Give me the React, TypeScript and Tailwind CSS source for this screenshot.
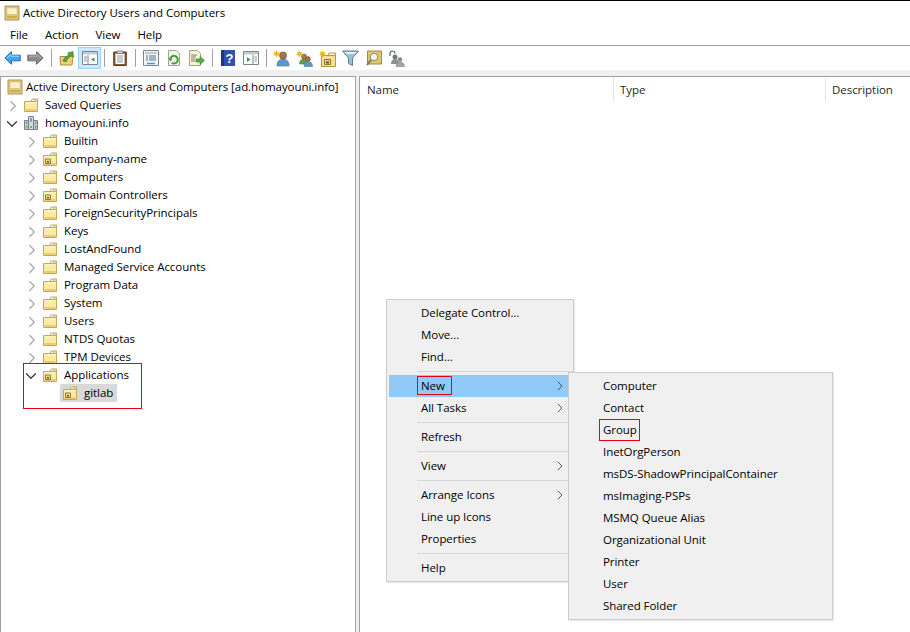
import React from "react";
import { ChevronDown, ChevronRight } from "lucide-react";

const FONT = "font-['Open_Sans','Noto_Sans',sans-serif]";

// tree icons
const Folder = ({ ou }: { ou?: boolean }) => (
  <svg width="16" height="16" viewBox="0 0 16 16" className="shrink-0">
    <path d="M1.500 4.500h13v10h-13z" fill="#fbe9a8" stroke="#c9a94f" />
    <path d="M8 4.500l1.200-2.500h5.300v2.500z" fill="#fdf6d8" stroke="#c9a94f" />
    <path d="M11 3h2.500" stroke="#7fb4e0" />
    <path d="M2.500 5.500h11v1h-11z" fill="#fff6cf" />
    <path d="M2.500 12h11v2h-11z" fill="#eccb6f" />
    {ou && <path d="M3.500 8h5v4.500h-5z" fill="#f3dc8e" stroke="#8f7a3a" />}
    {ou && <path d="M5 10h2v1.500h-2z" fill="#55502f" />}
  </svg>
);

const RootIcon = () => (
  <svg width="16" height="16" viewBox="0 0 16 16" className="shrink-0">
    <path d="M1 1h14v14H1z" fill="#e3c873" stroke="#a4946a" />
    <path d="M3 3h10v6.500H3z" fill="#fbf3cb" stroke="#c4b47c" strokeWidth=".5" />
    <path d="M3 11h10v2H3z" fill="#cfab4d" />
  </svg>
);

const DomainIcon = () => (
  <svg width="16" height="16" viewBox="0 0 16 16" className="shrink-0">
    <path d="M5.500 1.500h5v13h-5z" fill="#d5dbdf" stroke="#77838a" />
    <path d="M1.500 5.500h4v9h-4zM10.500 5.500h4v9h-4z" fill="#b9c3c9" stroke="#77838a" />
    <path d="M7 4h2M7 6h2M3 8h1M12 8h1" stroke="#4e5b63" />
    <path d="M3 11h1.500v1.500H3zM7 11h2v2H7zM12 11h1.500v1.500H12z" fill="#5cc04a" />
  </svg>
);

// toolbar icons
const Back = ({ flip, grey }: { flip?: boolean; grey?: boolean }) => (
  <svg width="17" height="14" viewBox="0 0 17 14" className={flip ? "-scale-x-100" : ""}>
    <path
      d="M.8 7L7.500 .8v3.400h8.700v5.600H7.500v3.400z"
      fill={grey ? "#8b8b8b" : "#42a5ee"}
      stroke={grey ? "#6a6a6a" : "#1b6fb8"}
    />
    <path d="M3 7L7 3.500v1.700h8" fill="none" stroke={grey ? "#b5b5b5" : "#a6dcfb"} />
  </svg>
);

const UpFolder = () => (
  <svg width="16" height="16" viewBox="0 0 16 16">
    <path d="M1 6.500h13l-1 8.500H1.500z" fill="#f2cf74" stroke="#b18f3c" />
    <path d="M4 11c1-3 3-5 6-6L8.500 3 14 1.500 14.500 7 12.500 5.800C10 7 8 9 7 12z" fill="#58a23c" stroke="#3a7726" strokeWidth=".6" />
  </svg>
);

const TreeToggle = () => (
  <svg width="16" height="14" viewBox="0 0 16 14">
    <path d="M.5 .5h15v13H.5z" fill="#fff" stroke="#7b8790" />
    <path d="M1 1h14v2.500H1z" fill="#c3ccd3" />
    <path d="M6 4v9" stroke="#7b8790" />
    <path d="M2 6h3M2 8h3M2 10h3" stroke="#8d99a3" />
    <path d="M12.500 6.500v4L9 8.500z" fill="#2e9e45" />
  </svg>
);

const Clipboard = () => (
  <svg width="14" height="16" viewBox="0 0 14 16">
    <path d="M.7 2h12.600v13.500H.7z" fill="#8a5a35" stroke="#5e3a1e" />
    <path d="M2.500 3.500h9V14h-9z" fill="#fff" />
    <path d="M4 1h6v2.500H4z" fill="#d2d6d9" stroke="#5b6670" strokeWidth=".7" />
    <path d="M4 6h6M4 8h6M4 10h6M4 12h6" stroke="#8c99a5" />
  </svg>
);

const Sheet = () => (
  <svg width="16" height="16" viewBox="0 0 16 16">
    <path d="M.5 .5h15v15H.5z" fill="#f2f4f6" stroke="#7b8790" />
    <path d="M2 2h12v2H2z" fill="#c3ccd3" />
    <path d="M3 6h2M6 6h7M3 8h2M6 8h7M3 10h2M6 10h7" stroke="#62717d" />
    <path d="M4 13.500h8" stroke="#3aa3db" strokeWidth="1.500" />
  </svg>
);

const Refresh = () => (
  <svg width="16" height="16" viewBox="0 0 16 16">
    <path d="M2.500 .5h8l3 3v12h-11z" fill="#f5f5ee" stroke="#a0a39a" />
    <path d="M4.200 9.500a3.800 3.800 0 1 1 1.500 3.200" fill="none" stroke="#3f9f3a" strokeWidth="2" />
    <path d="M2.500 8.500h4l-2 3z" fill="#3f9f3a" />
  </svg>
);

const ExportDoc = () => (
  <svg width="17" height="16" viewBox="0 0 17 16">
    <path d="M1.500 .5h8l3 3v12h-11z" fill="#faf5d8" stroke="#a8a27e" />
    <path d="M3 5h6M3 7h5M3 9h4M3 11h4" stroke="#7c7a63" />
    <path d="M8 9h4V6.500l4.500 4-4.500 4V12H8z" fill="#57b04a" stroke="#35802b" strokeWidth=".6" />
  </svg>
);

const Help = () => (
  <svg width="14" height="16" viewBox="0 0 14 16">
    <path d="M0 0h14v16H0z" fill="#2f51b3" />
    <path d="M0 0h3v16H0z" fill="#1d348a" />
    <text x="8.500" y="13" fontSize="13" fontWeight="700" textAnchor="middle" fill="#fff" fontFamily="Liberation Sans, sans-serif">?</text>
  </svg>
);

const RunPane = () => (
  <svg width="16" height="14" viewBox="0 0 16 14">
    <path d="M.5 .5h15v13H.5z" fill="#fff" stroke="#7b8790" />
    <path d="M1 1h14v2.500H1z" fill="#c3ccd3" />
    <path d="M10 4v9" stroke="#7b8790" />
    <path d="M11.500 6H14M11.500 8H14M11.500 10H14" stroke="#8d99a3" />
    <path d="M4 6v5l3.500-2.500z" fill="#2e9e45" />
  </svg>
);

const Spark = () => (
  <path d="M3.500 0l.8 2.400 2.500-.7-1.400 2 1.600 1.800-2.500-.3-1 2.300-.9-2.300L0 5.500l1.700-1.800L.3 1.700l2.400.7z" fill="#f2b01e" />
);

const NewUser = () => (
  <svg width="17" height="17" viewBox="0 0 17 17">
    <circle cx="10" cy="5.500" r="3.500" fill="#a5734c" stroke="#5e3e25" strokeWidth=".6" />
    <path d="M4 16c0-5 2.500-7 6-7s6 2 6 7z" fill="#5f97c8" stroke="#3c6b95" strokeWidth=".6" />
    <Spark />
  </svg>
);

const NewGroup = () => (
  <svg width="17" height="17" viewBox="0 0 17 17">
    <circle cx="8" cy="6.500" r="2.600" fill="#a3814f" stroke="#60502a" strokeWidth=".5" />
    <path d="M3.500 14c0-3.500 2-5 4.500-5s4 1.500 4 5z" fill="#6d9d4b" stroke="#466d2d" strokeWidth=".5" />
    <circle cx="12" cy="9" r="2.400" fill="#a5734c" stroke="#5e3e25" strokeWidth=".5" />
    <path d="M8 16.500c0-3.500 1.500-5 4-5s4.500 1.500 4.500 5z" fill="#5f97c8" stroke="#3c6b95" strokeWidth=".5" />
    <Spark />
  </svg>
);

const NewOu = () => (
  <svg width="17" height="17" viewBox="0 0 17 17">
    <path d="M2.500 5.500h14v11h-14z" fill="#f6df94" stroke="#b9963f" />
    <path d="M9 5.500L10 3h6.500v2.500z" fill="#fdf4cf" stroke="#b9963f" />
    <path d="M5.500 9.500h6v5h-6z" fill="#f0d27a" stroke="#8d7532" />
    <path d="M7 11.500h3v2H7z" fill="#5a5230" />
    <Spark />
  </svg>
);

const Funnel = () => (
  <svg width="17" height="16" viewBox="0 0 17 16">
    <path d="M.5 1h16l-6 7v7.500l-4-2V8z" fill="#9fc0d4" stroke="#64808f" />
    <path d="M2.500 2h12l-2 2h-8z" fill="#e3eef4" />
  </svg>
);

const FindIcon = () => (
  <svg width="16" height="16" viewBox="0 0 16 16">
    <path d="M1.500 1h14v13h-14z" fill="#e2c66c" stroke="#9f8a49" />
    <circle cx="8" cy="7" r="3.800" fill="#f7f3dc" stroke="#8a8a80" />
    <path d="M5 10l-4 5" stroke="#77766c" strokeWidth="2" />
  </svg>
);

const Delegate = () => (
  <svg width="17" height="17" viewBox="0 0 17 17">
    <path d="M2 6V3.500a2.500 2.500 0 0 1 5 0" fill="none" stroke="#5e6467" strokeWidth="1.200" />
    <circle cx="7" cy="7" r="2.500" fill="#74797b" />
    <path d="M3 14c0-3.500 2-5 4-5s4 1.500 4 5z" fill="#8b9092" />
    <circle cx="12" cy="9.500" r="2.300" fill="#888d8f" />
    <path d="M8 16.500c0-3 2-4.500 4-4.500s4.500 1.500 4.500 4.500z" fill="#a3a7a9" stroke="#6f7476" strokeWidth=".5" />
  </svg>
);

const Btn = ({ active, children }: { active?: boolean; children: React.ReactNode }) => (
  <div
    className={`w-[23px] h-[22px] flex items-center justify-center border ${
      active ? "bg-[#cce8ff] border-[#99d1ff]" : "border-transparent"
    }`}
  >
    {children}
  </div>
);

const Sep = ({ w = "w-[8px]" }: { w?: string }) => (
  <div className={`${w} h-[18px] flex justify-center shrink-0`}>
    <div className="w-px h-full bg-[#a0a0a0]" />
  </div>
);

const Twisty = ({ open }: { open?: boolean }) => (
  <span className="w-[19px] shrink-0 flex translate-y-[1px]">
    {open ? (
      <ChevronDown size={18} strokeWidth={1.800} className="-ml-[1px] shrink-0 text-[#404040]" />
    ) : (
      <ChevronRight size={18} strokeWidth={1.600} className="shrink-0 text-[#a6a6a6]" />
    )}
  </span>
);

const Row = ({ label, ou, open }: { label: string; ou?: boolean; open?: boolean }) => (
  <div className="flex items-center h-[18px]">
    <Twisty open={open} />
    <Folder ou={ou} />
    <span className="ml-[6px] whitespace-nowrap">{label}</span>
  </div>
);

const domainChildren: { label: string; ou?: boolean }[] = [
  { label: "Builtin" },
  { label: "company-name", ou: true },
  { label: "Computers" },
  { label: "Domain Controllers", ou: true },
  { label: "ForeignSecurityPrincipals" },
  { label: "Keys" },
  { label: "LostAndFound" },
  { label: "Managed Service Accounts" },
  { label: "Program Data" },
  { label: "System" },
  { label: "Users" },
  { label: "NTDS Quotas" },
  { label: "TPM Devices" },
];

const ContextItem = ({
  label,
  arrow,
  hot,
  box,
}: {
  label: string;
  arrow?: boolean;
  hot?: boolean;
  box?: string;
}) => (
  <div className={`h-[22px] flex items-center ${hot ? "bg-[#91c9f7]" : ""}`}>
    <span className="w-[32px] shrink-0" />
    <span className="relative whitespace-nowrap">
      {label}
      {box && <span className={`absolute border border-[#e60012] ${box}`} />}
    </span>
    {arrow && <ChevronRight size={16} strokeWidth={1.300} className="ml-auto mr-[3px] text-[#404040]" />}
  </div>
);

const MenuSep = () => (
  <div className="h-[7px] pl-[28px] -mr-[2px] flex items-center">
    <div className="h-px w-full bg-[#d7d7d7]" />
  </div>
);

export default function App() {
  return (
    <div className={`relative w-[910px] h-[632px] overflow-hidden bg-white text-[11.5px] leading-[18px] tracking-[-0.05px] text-black ${FONT}`}>
      <div className="h-px bg-black" />
      {/* title bar */}
      <div className="h-[24px] flex items-center pl-[4px] gap-[3px]">
        <RootIcon />
        <span>Active Directory Users and Computers</span>
      </div>
      {/* menu bar */}
      <div className="h-[21px] flex items-center pl-[10px] gap-[17px] border-b border-[#a0a0a0]">
        <span>File</span>
        <span>Action</span>
        <span>View</span>
        <span>Help</span>
      </div>
      {/* toolbar */}
      <div className="h-[24px] flex items-center pl-[1px]">
        <Btn><Back /></Btn>
        <Btn><Back flip grey /></Btn>
        <Sep />
        <Btn><UpFolder /></Btn>
        <Btn active><TreeToggle /></Btn>
        <Sep w="w-[7px]" />
        <Btn><Clipboard /></Btn>
        <Sep />
        <Btn><Sheet /></Btn>
        <Btn><Refresh /></Btn>
        <Btn><ExportDoc /></Btn>
        <Sep />
        <Btn><Help /></Btn>
        <Btn><RunPane /></Btn>
        <Sep />
        <Btn><NewUser /></Btn>
        <Btn><NewGroup /></Btn>
        <Btn><NewOu /></Btn>
        <Btn><Funnel /></Btn>
        <Btn><FindIcon /></Btn>
        <Btn><Delegate /></Btn>
      </div>
      {/* panes */}
      <div className="h-[562px] bg-[#f0f0f0] pt-[6px] flex gap-[3px]">
        <div className="w-[356px] bg-white border-t border-x border-[#a0a0a0] pt-px overflow-hidden">
          <div className="flex items-center h-[18px] pl-[6px] gap-[3px]">
            <RootIcon />
            <span className="whitespace-nowrap">Active Directory Users and Computers [ad.homayouni.info]</span>
          </div>
          <div className="ml-[3px]">
            <Row label="Saved Queries" />
            <div className="flex items-center h-[18px]">
              <Twisty open />
              <DomainIcon />
              <span className="ml-[6px]">homayouni.info</span>
            </div>
            <div className="ml-[19px]">
              {domainChildren.map((c) => (
                <Row key={c.label} label={c.label} ou={c.ou} />
              ))}
              <div className="relative">
                <Row label="Applications" ou open />
                <div className="flex items-center h-[18px] ml-[37px] pl-[2px] w-[57px] bg-[#d9d9d9]">
                  <Folder ou />
                  <span className="ml-[6px]">gitlab</span>
                </div>
                {/* red annotation */}
                <div className="absolute left-0 -top-[3px] w-[119px] h-[46px] border border-[#e60012]" />
              </div>
            </div>
          </div>
        </div>
        {/* results pane */}
        <div className="flex-1 bg-white border-t border-l border-[#a0a0a0]">
          <div className="h-[25px] flex items-center text-[#1f1f1f]">
            <div className="w-[254px] h-full pl-[7px] flex items-center border-r border-[#e5e5e5]">Name</div>
            <div className="w-[212px] h-full pl-[6px] flex items-center border-r border-[#e5e5e5]">Type</div>
            <div className="pl-[6px]">Description</div>
          </div>
        </div>
      </div>

      {/* context menu */}
      <div className="absolute left-[386px] top-[299px] w-[188px] bg-[#f0f0f0] border border-[#cccccc] p-[2px] shadow-[1px_1px_1px_rgba(0,0,0,0.08)]">
        <ContextItem label="Delegate Control..." />
        <ContextItem label="Move..." />
        <ContextItem label="Find..." />
        <MenuSep />
        <ContextItem label="New" arrow hot box="-left-[4px] -right-[7px] -top-[1px] bottom-0" />
        <ContextItem label="All Tasks" arrow />
        <MenuSep />
        <ContextItem label="Refresh" />
        <MenuSep />
        <ContextItem label="View" arrow />
        <MenuSep />
        <ContextItem label="Arrange Icons" arrow />
        <ContextItem label="Line up Icons" />
        <ContextItem label="Properties" />
        <MenuSep />
        <ContextItem label="Help" />
      </div>

      {/* submenu */}
      <div className="absolute left-[568px] top-[372px] w-[265px] bg-[#f0f0f0] border border-[#cccccc] p-[2px] shadow-[1px_1px_1px_rgba(0,0,0,0.08)]">
        <ContextItem label="Computer" />
        <ContextItem label="Contact" />
        <ContextItem label="Group" box="-left-[4px] -right-[3px] -top-[2px] -bottom-[2px]" />
        <ContextItem label="InetOrgPerson" />
        <ContextItem label="msDS-ShadowPrincipalContainer" />
        <ContextItem label="msImaging-PSPs" />
        <ContextItem label="MSMQ Queue Alias" />
        <ContextItem label="Organizational Unit" />
        <ContextItem label="Printer" />
        <ContextItem label="User" />
        <ContextItem label="Shared Folder" />
      </div>
    </div>
  );
}
